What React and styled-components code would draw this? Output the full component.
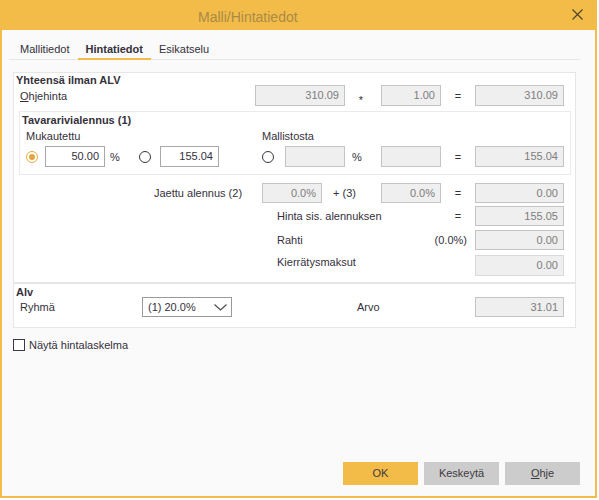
import React from 'react';
import styled, { createGlobalStyle } from 'styled-components';

const ORANGE = '#f3bc49';
const TEXT = '#35313b';

const Global = createGlobalStyle`
  html, body { margin: 0; padding: 0; background: #ffffff; }
  body { font-family: "Liberation Sans", Arial, sans-serif; font-size: 11px; color: ${TEXT}; }
  * { box-sizing: border-box; }
`;

const Window = styled.div`
  width: 597px;
  height: 498px;
  background: ${ORANGE};
  padding: 0 2px 2px;
  display: flex;
  flex-direction: column;
`;

const TitleBar = styled.div`
  height: 30px;
  flex: none;
  display: flex;
  align-items: flex-start;
`;

const Title = styled.div`
  margin-left: 196px;
  padding-top: 2px;
  line-height: 30px;
  font-size: 14px;
  color: #a98a48;
`;

const CloseButton = styled.div`
  margin-left: auto;
  margin-right: 12px;
  margin-top: 9px;
  width: 11px;
  height: 11px;
  display: flex;
`;

const Body = styled.div`
  flex: 1;
  background: #fafafa;
  display: flex;
  flex-direction: column;
`;

const Tabs = styled.div`
  display: flex;
  margin: 0 15px 0 7px;
  padding: 10px 0 0 3px;
  border-bottom: 1px solid #e6e6e6;
`;

const Tab = styled.div`
  height: 20px;
  line-height: 18px;
  padding: 0 8px;
  margin-bottom: -1px;
  border-bottom: 2px solid ${p => (p.$active ? ORANGE : 'transparent')};
  font-weight: ${p => (p.$active ? 'bold' : 'normal')};
  color: ${TEXT};
`;

const Panel = styled.div`
  margin: 12px 19px 0 11px;
  display: flex;
  flex-direction: column;
`;

const Section = styled.div`
  background: #ffffff;
  border: 1px solid #e6e6e6;
  padding: ${p => p.$pad};
`;

const SectionTitle = styled.div`
  font-weight: bold;
  line-height: 12px;
  padding-left: 2px;
`;

const SubPanel = styled.div`
  margin: 5px 4px 0 5px;
  border: 1px solid #ebebeb;
  padding: 2px 0 7px;
`;

const Row = styled.div`
  display: flex;
  align-items: center;
  height: ${p => p.$h || 20}px;
  margin-top: ${p => p.$mt || 0}px;
  padding-left: ${p => p.$pl || 0}px;
`;

const LabelRow = styled.div`
  display: flex;
  line-height: 12px;
  margin-top: ${p => p.$mt || 0}px;
  padding-left: ${p => p.$pl || 0}px;
`;

const Cell = styled.div`
  width: ${p => p.$w}px;
  flex: none;
  text-align: ${p => p.$align || 'left'};
  padding-left: ${p => p.$pl || 0}px;
  padding-top: ${p => p.$pt || 0}px;
  align-self: ${p => p.$self || 'auto'};
  line-height: ${p => (p.$self ? '14px' : 'normal')};
  white-space: nowrap;
`;

const Field = styled.div`
  width: ${p => p.$w}px;
  height: ${p => p.$h || 20}px;
  line-height: ${p => (p.$h || 20) - 2}px;
  flex: none;
  border: 1px solid ${p => (p.$edit ? '#a9a9a9' : p.$faint ? '#d9d9d9' : '#c4c4c4')};
  background: ${p => (p.$edit ? '#ffffff' : '#efefef')};
  color: ${p => (p.$edit ? TEXT : '#7d7d7d')};
  text-align: right;
  padding-right: 5px;
`;

const RadioCell = styled.div`
  width: ${p => p.$w}px;
  flex: none;
  display: flex;
  align-items: center;
`;

const Radio = styled.span`
  width: 12px;
  height: 12px;
  border-radius: 50%;
  border: 1.3px solid ${p => (p.$checked ? '#e6ac45' : '#3a3540')};
  background: #ffffff;
  display: flex;
  align-items: center;
  justify-content: center;
  &::after {
    content: '';
    width: 6px;
    height: 6px;
    border-radius: 50%;
    background: #e3a53c;
    display: ${p => (p.$checked ? 'block' : 'none')};
  }
`;

const Select = styled.div`
  width: 90px;
  height: 20px;
  flex: none;
  border: 1px solid #9a9a9a;
  background: #ffffff;
  display: flex;
  align-items: center;
  justify-content: space-between;
  padding: 0 4px 0 5px;
  color: ${TEXT};
`;

const CheckRow = styled.label`
  display: flex;
  align-items: center;
  gap: 4px;
  margin: 11px 0 0 11px;
  line-height: 12px;
`;

const CheckBox = styled.span`
  width: 12px;
  height: 12px;
  border: 1px solid #3d3847;
  background: #ffffff;
  flex: none;
`;

const Buttons = styled.div`
  margin: auto 15px 11px auto;
  display: flex;
  gap: 6px;
`;

const Button = styled.div`
  width: 75px;
  height: 23px;
  line-height: 23px;
  text-align: center;
  background: ${p => (p.$primary ? ORANGE : '#cccccc')};
  color: #3d3a40;
`;

export default function App() {
  return (
    <>
      <Global />
      <Window>
        <TitleBar>
          <Title>Malli/Hintatiedot</Title>
          <CloseButton>
            <svg width="11" height="11" viewBox="0 0 11 11">
              <path d="M0.5 0.5 L10.5 10.5 M10.5 0.5 L0.5 10.5" stroke="#4a4030" strokeWidth="1.1" fill="none" />
            </svg>
          </CloseButton>
        </TitleBar>
        <Body>
          <Tabs>
            <Tab>Mallitiedot</Tab>
            <Tab $active>Hintatiedot</Tab>
            <Tab>Esikatselu</Tab>
          </Tabs>
          <Panel>
            <Section $pad="1px 0 6px 0">
              <SectionTitle>Yhteensä ilman ALV</SectionTitle>
              <Row $h={21} $mt={-1} $pl={6}>
                <Cell $w={235}><u>O</u>hjehinta</Cell>
                <Field $w={90} $h={21}>310.09</Field>
                <Cell $w={28} $align="center" $pl={4} $pt={8}>*</Cell>
                <Cell $w={8} />
                <Field $w={60} $h={21}>1.00</Field>
                <Cell $w={34} $align="center">=</Cell>
                <Field $w={89} $h={21}>310.09</Field>
              </Row>
              <SubPanel>
                <SectionTitle>Tavararivialennus (1)</SectionTitle>
                <LabelRow $mt={4} $pl={6}>
                  <Cell $w={236}>Mukautettu</Cell>
                  <Cell $w={100}>Mallistosta</Cell>
                </LabelRow>
                <Row $h={21} $mt={4} $pl={6}>
                  <RadioCell $w={19}><Radio $checked /></RadioCell>
                  <Field $w={60} $h={21} $edit>50.00</Field>
                  <Cell $w={34} $pl={5}>%</Cell>
                  <RadioCell $w={21}><Radio /></RadioCell>
                  <Field $w={59} $h={21} $edit>155.04</Field>
                  <Cell $w={43} />
                  <RadioCell $w={23}><Radio /></RadioCell>
                  <Field $w={60} $h={21} />
                  <Cell $w={36} $pl={7}>%</Cell>
                  <Field $w={60} $h={21} />
                  <Cell $w={34} $align="center">=</Cell>
                  <Field $w={89} $h={21}>155.04</Field>
                </Row>
              </SubPanel>
              <Row $mt={8} $pl={140}>
                <Cell $w={108}>Jaettu alennus (2)</Cell>
                <Field $w={60}>0.0%</Field>
                <Cell $w={59} $pl={11}>+ (3)</Cell>
                <Field $w={60}>0.0%</Field>
                <Cell $w={34} $align="center">=</Cell>
                <Field $w={89}>0.00</Field>
              </Row>
              <Row $mt={3} $pl={263}>
                <Cell $w={164}>Hinta sis. alennuksen</Cell>
                <Cell $w={34} $align="center">=</Cell>
                <Field $w={89}>155.05</Field>
              </Row>
              <Row $mt={4} $pl={263}>
                <Cell $w={130}>Rahti</Cell>
                <Cell $w={60} $align="right">(0.0%)</Cell>
                <Cell $w={8} />
                <Field $w={89}>0.00</Field>
              </Row>
              <Row $h={21} $mt={5} $pl={263}>
                <Cell $w={198} $self="flex-start">Kierrätysmaksut</Cell>
                <Field $w={89} $h={21} $faint>0.00</Field>
              </Row>
            </Section>
            <Section $pad="2px 0 10px 0">
              <SectionTitle>Alv</SectionTitle>
              <Row $mt={-1} $pl={6}>
                <Cell $w={122}>Ryhmä</Cell>
                <Select>
                  <span>(1) 20.0%</span>
                  <svg width="13" height="7" viewBox="0 0 13 7">
                    <polyline points="0.5,0.5 6.5,6 12.5,0.5" stroke="#4a4650" strokeWidth="1.1" fill="none" />
                  </svg>
                </Select>
                <Cell $w={125} />
                <Cell $w={118}>Arvo</Cell>
                <Field $w={89}>31.01</Field>
              </Row>
            </Section>
          </Panel>
          <CheckRow>
            <CheckBox />
            <span>Näytä hintalaskelma</span>
          </CheckRow>
          <Buttons>
            <Button $primary>OK</Button>
            <Button>Keskeytä</Button>
            <Button><u>O</u>hje</Button>
          </Buttons>
        </Body>
      </Window>
    </>
  );
}
